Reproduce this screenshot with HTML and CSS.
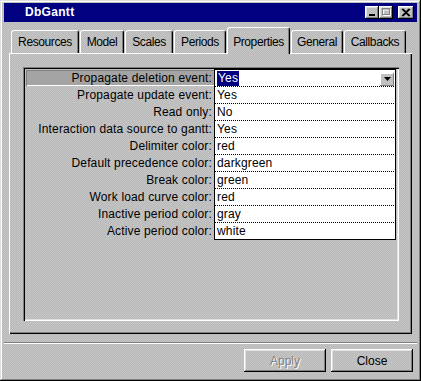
FILE: index.html
```html
<!DOCTYPE html>
<html lang="en">
<head>
  <meta charset="UTF-8">
  <title>DbGantt</title>
  <link rel="stylesheet" href="styles.css">
</head>
<body>
  <div class="window">
    <div class="titlebar">
      <span class="title">DbGantt</span>
      <span class="tbtn">
        <svg width="14" height="13" viewBox="0 0 14 13"><rect x="4" y="8" width="6" height="2" fill="#000"/></svg>
      </span>
      <span class="tbtn">
        <svg width="14" height="13" viewBox="0 0 14 13">
          <path d="M4.5 3.5h7v6h-7z M4 4h8" stroke="#fff" fill="none"/>
          <path d="M3.5 2.5h7v6h-7z M3 3h8" stroke="#808080" fill="none"/>
        </svg>
      </span>
      <span class="tbtn close">
        <svg width="16" height="13" viewBox="0 0 16 13"><path d="M4 3l7 7M5 3l7 7M11 3l-7 7M12 3l-7 7" stroke="#000" stroke-width="1.1"/></svg>
      </span>
    </div>

    <div class="tabs">
      <div class="tab t-resources">Resources</div>
      <div class="tab t-model">Model</div>
      <div class="tab t-scales">Scales</div>
      <div class="tab t-periods">Periods</div>
      <div class="tab t-properties active">Properties</div>
      <div class="tab t-general">General</div>
      <div class="tab t-callbacks">Callbacks</div>
    </div>

    <div class="page">
      <div class="group">
        <div class="props">
          <div class="label current">Propagate deletion event:</div>
          <div class="value first"><span class="sel">Yes</span><span class="drop"><svg width="7" height="4" viewBox="0 0 7 4"><path d="M0 0h7L3.5 4z" fill="#000"/></svg></span></div>

          <div class="label">Propagate update event:</div>
          <div class="value">Yes</div>

          <div class="label">Read only:</div>
          <div class="value">No</div>

          <div class="label">Interaction data source to gantt:</div>
          <div class="value">Yes</div>

          <div class="label">Delimiter color:</div>
          <div class="value">red</div>

          <div class="label">Default precedence color:</div>
          <div class="value">darkgreen</div>

          <div class="label">Break color:</div>
          <div class="value">green</div>

          <div class="label">Work load curve color:</div>
          <div class="value">red</div>

          <div class="label">Inactive period color:</div>
          <div class="value">gray</div>

          <div class="label">Active period color:</div>
          <div class="value last">white</div>
        </div>
      </div>
    </div>

    <div class="separator"></div>

    <div class="actions">
      <button class="btn" disabled>Apply</button>
      <button class="btn">Close</button>
    </div>
  </div>
</body>
</html>
```

FILE: styles.css
```css
body {
  margin: 0;
  font-family: "Liberation Sans", Arial, sans-serif;
  font-size: 12px;
  color: #000;
}
.window,
.tab,
.btn,
.tbtn {
  background-color: #c0c0c0;
  background-image: repeating-conic-gradient(#b9b9b9 0 25%, #c5c5c5 0 50%);
  background-size: 2px 2px;
  background-attachment: fixed;
}
.window {
  width: 421px;
  height: 381px;
  box-sizing: border-box;
  padding: 3px 4px 0 4px;
  box-shadow: inset -1px -1px #000, inset 1px 1px #dfdfdf, inset -2px -2px #808080, inset 2px 2px #fff;
}

/* title bar */
.titlebar {
  height: 19px;
  background: #000080;
  display: flex;
  align-items: center;
  padding: 0 3px 0 21px;
}
.title {
  color: #fff;
  font-weight: bold;
  font-size: 12px;
  line-height: 19px;
  letter-spacing: 0.3px;
  flex: 1;
}
.tbtn {
  width: 14px;
  height: 13px;
  display: flex;
  box-shadow: inset -1px -1px #000, inset 1px 1px #fff, inset -2px -2px #808080, inset 2px 2px #dfdfdf;
}
.tbtn.close {
  width: 16px;
  margin-left: 5px;
}

/* tabs */
.tabs {
  display: flex;
  align-items: flex-end;
  gap: 1px;
  height: 26px;
  margin: 5px 0 0 5px;
  padding-left: 2px;
}
.tab {
  box-sizing: border-box;
  height: 23px;
  line-height: 22px;
  text-align: center;
  letter-spacing: -0.4px;
  border-top: 1px solid #fff;
  border-left: 1px solid #fff;
  border-right: 1px solid #000;
  border-radius: 3px 3px 0 0;
  box-shadow: inset -1px 0 #808080;
}
.tab.active {
  height: 27px;
  padding-top: 3px;
  margin-bottom: -1px;
  position: relative;
  z-index: 1;
}
.t-resources { width: 68px; }
.t-model { width: 44px; }
.t-scales { width: 48px; }
.t-periods { width: 52px; }
.t-properties { width: 63px; }
.t-general { width: 52px; }
.t-callbacks { width: 62px; }

/* tab page */
.page {
  width: 403px;
  height: 281px;
  box-sizing: border-box;
  margin-left: 5px;
  padding: 14px 0 0 14px;
  box-shadow: inset 1px 1px #fff, inset -1px -1px #000, inset -2px -2px #808080;
}
.group {
  width: 376px;
  height: 254px;
  box-sizing: border-box;
  padding: 2px 0 0 3px;
  box-shadow: inset 1px 1px #808080, inset 2px 2px #000, inset -1px -1px #fff, inset -2px -2px #dfdfdf;
}
.props {
  display: grid;
  grid-template-columns: 188px 182px;
}
.label {
  margin-top: 1px;
  height: 16px;
  line-height: 16px;
  text-align: right;
  padding-right: 2px;
  letter-spacing: 0.15px;
  white-space: nowrap;
}
.label.current {
  background: #a4a4a4;
  box-shadow: inset 1px 1px #808080, inset 0 -1px #fff;
}
.value {
  height: 16px;
  line-height: 16px;
  padding-left: 2px;
  letter-spacing: 0.15px;
  background: #fff;
  border-left: 1px solid #000;
  border-right: 1px solid #000;
  border-top: 1px dotted #000;
  display: flex;
  align-items: center;
}
.value.first {
  border-top: 1px solid #000;
}
.value.last {
  border-bottom: 1px solid #000;
}
.sel {
  background: #000080;
  color: #fff;
  padding: 0 1px;
  line-height: 15px;
}
.drop {
  margin: 2px 1px 0 auto;
  width: 14px;
  height: 13px;
  display: flex;
  align-items: center;
  justify-content: center;
  background: #c0c0c0;
  box-shadow: inset -1px -1px #808080, inset 1px 1px #fff;
}

/* bottom */
.separator {
  margin-top: 8px;
  border-top: 1px solid #808080;
  border-bottom: 1px solid #fff;
}
.actions {
  display: flex;
  justify-content: flex-end;
  gap: 5px;
  margin-top: 5px;
  padding-right: 4px;
}
.btn {
  width: 82px;
  height: 23px;
  border: none;
  font-family: "Liberation Sans", Arial, sans-serif;
  font-size: 12px;
  color: #000;
  box-shadow: inset -1px -1px #000, inset 1px 1px #fff, inset -2px -2px #808080, inset 2px 2px #dfdfdf;
}
.btn:disabled {
  color: #808080;
  text-shadow: 1px 1px #fff;
}
```
